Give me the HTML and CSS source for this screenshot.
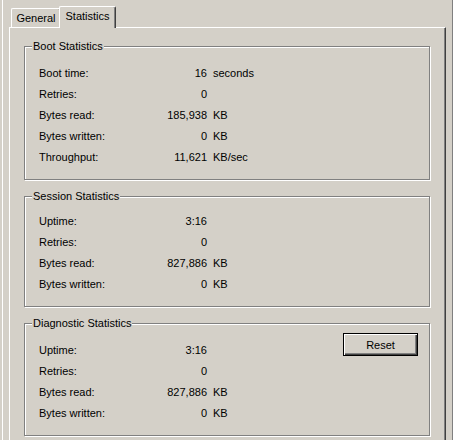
FILE: index.html
```html
<!DOCTYPE html>
<html>
<head>
<meta charset="utf-8">
<link rel="stylesheet" href="styles.css">
</head>
<body>
<div class="frame">
  <div class="tabs">
    <div class="tab">General</div>
    <div class="tab active">Statistics</div>
  </div>
  <div class="pane">
    <div class="group">
      <div class="title">Boot Statistics</div>
      <div class="rows">
        <div class="row"><span>Boot time:</span><span class="val">16</span><span class="unit">seconds</span></div>
        <div class="row"><span>Retries:</span><span class="val">0</span><span class="unit"></span></div>
        <div class="row"><span>Bytes read:</span><span class="val">185,938</span><span class="unit">KB</span></div>
        <div class="row"><span>Bytes written:</span><span class="val">0</span><span class="unit">KB</span></div>
        <div class="row"><span>Throughput:</span><span class="val">11,621</span><span class="unit">KB/sec</span></div>
      </div>
    </div>
    <div class="group session">
      <div class="title">Session Statistics</div>
      <div class="rows">
        <div class="row"><span>Uptime:</span><span class="val">3:16</span><span class="unit"></span></div>
        <div class="row"><span>Retries:</span><span class="val">0</span><span class="unit"></span></div>
        <div class="row"><span>Bytes read:</span><span class="val">827,886</span><span class="unit">KB</span></div>
        <div class="row"><span>Bytes written:</span><span class="val">0</span><span class="unit">KB</span></div>
      </div>
    </div>
    <div class="group">
      <div class="title">Diagnostic Statistics</div>
      <div class="body">
        <div class="rows">
          <div class="row"><span>Uptime:</span><span class="val">3:16</span><span class="unit"></span></div>
          <div class="row"><span>Retries:</span><span class="val">0</span><span class="unit"></span></div>
          <div class="row"><span>Bytes read:</span><span class="val">827,886</span><span class="unit">KB</span></div>
          <div class="row"><span>Bytes written:</span><span class="val">0</span><span class="unit">KB</span></div>
        </div>
        <button class="btn">Reset</button>
      </div>
    </div>
  </div>
</div>
</body>
</html>
```

FILE: styles.css
```css
html, body {
  margin: 0;
  height: 100%;
}
body {
  background: #d4d0c8;
  color: #000;
  font: 11px "Liberation Sans", Arial, sans-serif;
  overflow: hidden;
}
.frame {
  box-sizing: border-box;
  margin-left: 2px;
  width: 451px;
  height: 440px;
  padding: 6px 6px 0 6px;
  border-left: 1px solid #fff;
  border-right: 1px solid #808080;
}
.tabs {
  display: flex;
  align-items: flex-end;
  height: 21px;
  padding-left: 2px;
}
.tab {
  box-sizing: border-box;
  height: 19px;
  line-height: 18px;
  text-align: center;
  border-top: 1px solid #fff;
  border-left: 1px solid #fff;
  border-right: 1px solid #404040;
  border-radius: 2px 2px 0 0;
  box-shadow: inset -1px 0 0 #808080;
}
.tab:first-child {
  width: 50px;
}
.tab.active {
  position: relative;
  z-index: 1;
  width: 57px;
  height: 22px;
  margin-left: -2px;
  margin-bottom: -1px;
  line-height: 18px;
  padding-bottom: 3px;
  background: #d4d0c8;
}
.pane {
  box-sizing: border-box;
  height: 420px;
  padding: 18px 15px 0 14px;
  border-top: 1px solid #fff;
  border-left: 1px solid #fff;
  border-right: 1px solid #404040;
  box-shadow: inset -1px 0 0 #808080;
}
.group {
  margin-bottom: 16px;
  border: 1px solid #808080;
  box-shadow: inset 1px 1px 0 #fff, 1px 1px 0 #fff;
}
.title {
  width: max-content;
  margin: -7px 0 0 7px;
  padding: 0 1px;
  line-height: 13px;
  background: #d4d0c8;
}
.rows {
  padding: 9px 0 12px 14px;
}
.session .rows {
  padding-top: 7px;
}
.row {
  display: grid;
  grid-template-columns: 110px 58px auto;
  height: 21px;
  align-items: center;
  white-space: nowrap;
}
.val {
  text-align: right;
}
.unit {
  padding-left: 6px;
}
.body {
  display: flex;
  justify-content: space-between;
  align-items: flex-start;
}
.btn {
  box-sizing: border-box;
  width: 75px;
  height: 23px;
  margin: 3px 11px 0 0;
  padding: 0;
  font: inherit;
  color: #000;
  background: #d4d0c8;
  border: 1px solid #000;
  border-radius: 0;
  box-shadow: inset 1px 1px 0 #fff, inset -1px -1px 0 #404040, inset -2px -2px 0 #808080;
}
```
